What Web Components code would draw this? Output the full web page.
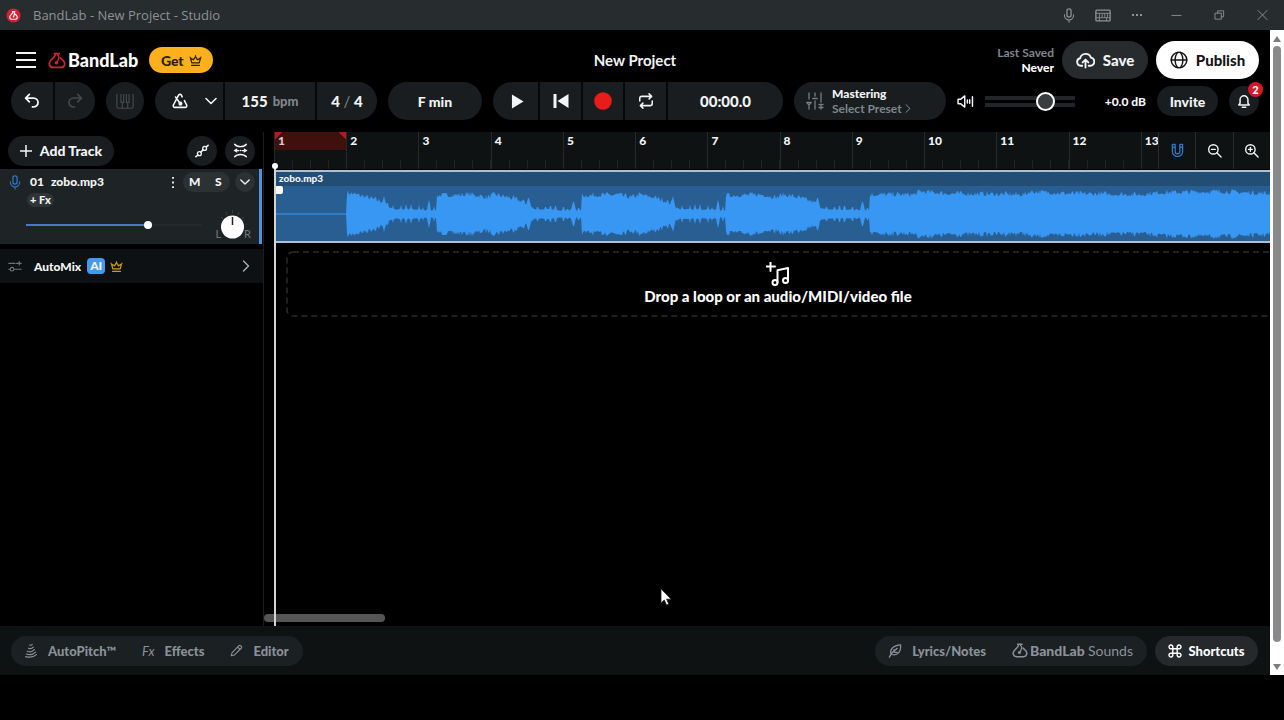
<!DOCTYPE html>
<html lang="en">
<head>
<meta charset="utf-8">
<meta name="viewport" content="width=device-width, initial-scale=1">
<title>BandLab - New Project - Studio</title>
<style>
  html, body { margin: 0; background: #000; }
  body { font-family: Lato, "Noto Sans", sans-serif; color: #f2f4f5; font-size: 14px; }
</style>
</head>
<body>
<studio-app></studio-app>
<script>
const BASE = `
  *, *::before, *::after { box-sizing: border-box; }
  button { font: inherit; color: inherit; background: none; border: 0; padding: 0; margin: 0;
    display: inline-flex; align-items: center; justify-content: center; white-space: nowrap; }
  a { color: inherit; text-decoration: none; }
  h1, h2, p { margin: 0; font: inherit; }
`;

function define(name, css, html, ready) {
  const template = document.createElement('template');
  template.innerHTML = `<style>${BASE}${css}</style>${html}`;
  customElements.define(name, class extends HTMLElement {
    connectedCallback() {
      if (this.shadowRoot) return;
      this.attachShadow({ mode: 'open' }).append(template.content.cloneNode(true));
      if (ready) ready.call(this, this.shadowRoot);
    }
  });
}

/* Icons: [viewBox, markup]; strokes and fills take the current colour. */
const ICONS = {
  menu: ['0 0 20 18', '<path d="M0 2h20M0 9h20M0 16h20" stroke-width="2.2"/>'],
  flame: ['0 0 20 18', '<path d="M7 1.300h5.600M8.200 1.500c.2 1.700-.6 2.900-2 4.100L3 9C.1 12.400 1.600 16.700 5.600 16.700h8.800c4 0 5.500-4.300 2.600-7.700L13.800 6" stroke-width="1.900"/><path d="M10.600 1.500c.2 2 1.800 2.600 1.400 4.500-.3 1.600-1 3-1.700 4.400" stroke-width="1.600"/><circle cx="9.300" cy="11.500" r="1.900" class="f"/>'],
  crown: ['0 0 16 16', '<path d="M3.400 10.800 1.800 4.800 5.400 7.200 8 3.200l2.600 4 3.600-2.400-1.600 6zM3.200 14h9.600"/><circle cx="8" cy="1.800" r=".7" class="f"/><circle cx="1.200" cy="3.800" r=".7" class="f"/><circle cx="14.800" cy="3.800" r=".7" class="f"/>'],
  undo: ['0 0 18 18', '<path d="M6 1.500 1.800 5.700 6 10M2 5.700h8.800a5 5 0 0 1 0 10H9.500" stroke-width="2"/>'],
  redo: ['0 0 18 18', '<path d="M12 1.500 16.200 5.700 12 10M16 5.700H7.200a5 5 0 0 0 0 10h1.300" stroke-width="1.800"/>'],
  keys: ['0 0 20 18', '<path d="M1 1v13.500a2 2 0 0 0 2 2h14a2 2 0 0 0 2-2V1M7 10v6.500M13 10v6.500M5.500 1v9h3V1M11.500 1v9h3V1" stroke-width="1.300"/>'],
  metronome: ['0 0 18 18', '<path d="M11.400 4.300 10.600 2.500a1.800 1.800 0 0 0-3.200 0L1.600 13.500a1.800 1.800 0 0 0 1.600 2.700h11.600a1.800 1.800 0 0 0 1.600-2.700L14 8.500M4 4.500l5 7" stroke-width="1.800"/><circle cx="9.500" cy="12" r="2.300" class="f"/>'],
  chevron: ['0 0 12 12', '<path d="m1 3.500 5 5 5-5" stroke-width="1.600"/>'],
  right: ['0 0 8 12', '<path d="m1.500 1 5 5-5 5" stroke-width="1.400"/>'],
  play: ['0 0 14 16', '<path class="f" d="M1 .5 13.500 8 1 15.500z"/>'],
  back: ['0 0 16 16', '<path class="f" d="M.5 1h3v14h-3zM15.500 1v14L4.500 8z"/>'],
  record: ['0 0 18 18', '<circle class="f" cx="9" cy="9" r="8.800"/>'],
  loop: ['0 0 18 18', '<path d="M2 9V5.800a2 2 0 0 1 2-2h11M12.500 1l2.800 2.800-2.800 2.800M16 9v3.200a2 2 0 0 1-2 2H3M5.500 11.400 2.700 14.200 5.500 17" stroke-width="1.700"/>'],
  mixer: ['0 0 18 18', '<path d="M3 1v6M3 14v3M9 1v3M9 9v8M15 1v9M15 13v4M.8 10.500h4.400L3 13.200zM6.800 6.500h4.400M13 12.500h4M13 15.500h4" stroke-width="1.300"/>'],
  cloud: ['0 0 20 18', '<path d="M6.500 14.500H5A4 4 0 0 1 4.300 6.600 6 6 0 0 1 15.800 6a4.300 4.300 0 0 1-.4 8.500h-2M10 16.500V8.200M7 11l3-3 3 3" stroke-width="2"/>'],
  globe: ['0 0 18 18', '<circle cx="9" cy="9" r="7.800"/><path d="M1.200 9h15.600M7.500 1.400c-3.300 4.500-3.300 10.700 0 15.200M10.500 1.400c3.300 4.500 3.300 10.700 0 15.200" stroke-width="1.400"/>'],
  speaker: ['0 0 18 14', '<path d="M1 4.500h3L8.200 1v12L4 9.500H1zM11 5.500v3M13.500 5v4M16.500 2v10" stroke-width="1.600"/>'],
  bell: ['0 0 16 18', '<path d="M2 13.500h12l-1.500-2V7.500a4.500 4.500 0 0 0-9 0v4zM6 16.200h4" stroke-width="1.700"/>'],
  plus: ['0 0 12 12', '<path d="M6 0v12M0 6h12" stroke-width="1.500"/>'],
  automation: ['0 0 16 16', '<circle cx="5" cy="11" r="2.200"/><circle cx="11" cy="5" r="2.200"/><path d="M1 14.500l2.200-1.800M6.600 9.300 9.300 6.700M12.800 3.300l2.200-1.800" stroke-width="1.700"/>'],
  fit: ['0 0 18 18', '<path d="M2 1.500c1.500 2 4 2.800 7 2.800s5.500-.8 7-2.800M2 16.500c1.500-2 4-2.800 7-2.800s5.500.8 7 2.800" stroke-width="1.700"/><path d="M5 9h2M11 9h2" stroke-width="1.500"/><path class="f" d="M.5 9 5 6.200v5.600zM17.500 9 13 6.200v5.600z"/><circle class="f" cx="9" cy="9" r="1"/>'],
  mic: ['0 0 14 18', '<rect x="4.500" y="1" width="5" height="10" rx="2.500"/><path d="M1.500 8v.8a5.500 5.500 0 0 0 11 0V8M7 14.300V17" stroke-width="1.300"/>'],
  kebab: ['0 0 4 12', '<path class="f" d="M1 0h2v2H1zM1 5h2v2H1zM1 10h2v2H1z"/>'],
  automix: ['0 0 18 14', '<path d="M1 3h8M11 3h6M14.500.8v4.400M8.500 10.500h8.500M1 10.500h1.500" /><circle cx="5.300" cy="10.500" r="2.300"/>'],
  magnet: ['0 0 14 16', '<path d="M1.500 1.500h3V9a2.500 2.500 0 0 0 5 0V1.500h3V9a5.500 5.500 0 0 1-11 0zM1.500 4.500h3M9.500 4.500h3" stroke-width="1.400"/>'],
  zoomout: ['0 0 16 16', '<circle cx="6.800" cy="6.800" r="5"/><path d="m10.500 10.500 4.500 4.500M4.800 6.800h4" stroke-width="1.500"/>'],
  zoomin: ['0 0 16 16', '<circle cx="6.800" cy="6.800" r="5"/><path d="m10.500 10.500 4.500 4.500M4.800 6.800h4M6.800 4.800v4" stroke-width="1.500"/>'],
  note: ['0 0 24 24', '<path d="M4.500 0v9M0 4.500h9" stroke-width="2"/><circle cx="9" cy="20.500" r="2.500" stroke-width="2"/><circle cx="19.500" cy="18.500" r="2.500" stroke-width="2"/><path d="M11.500 20.500V8.200L22 6v12.500" stroke-width="2"/>'],
  autopitch: ['0 0 16 18', '<path d="M6.500 2.500c1.200.4 2.200.1 3-.9M5 6.200c2 1 4.300.4 5.700-1.200M3.500 9.800c3 1.300 6.500.4 8.500-1.800M2.500 13.200c3.800 1.400 8.500.3 11-2.200M1.500 16.300c5 1.200 10.500 0 13-2.300" stroke-width="1.400"/>'],
  pencil: ['0 0 16 16', '<path d="M1.500 14.500 2.600 10.600 10.800 2.200a1.800 1.800 0 0 1 2.600 0l.4.400a1.800 1.800 0 0 1 0 2.600L5.500 13.500zM9.300 3.800l3 3" stroke-width="1.400"/>'],
  feather: ['0 0 16 16', '<path d="M1.500 15C3.500 11 6.500 7.500 10.500 5M3.500 12C1.500 6.500 6 1.500 14.500 1c.3 8-3.500 12.500-10 11M6.800 6.500v2.500M7.500 9.500h3" stroke-width="1.400"/>'],
  command: ['0 0 16 16', '<path d="M5.500 5.500H3.700a2.200 2.200 0 1 1 1.800-1.800v8.600a2.200 2.200 0 1 1-1.800-1.800h8.600a2.200 2.200 0 1 1-1.800 1.800V3.700a2.200 2.200 0 1 1 1.800 1.800z" stroke-width="1.600"/>'],
  typing: ['0 0 18 14', '<rect x="1" y="1" width="16" height="12" rx="1"/><path d="M1 4.500h16M5 5v4M8 5v4M11 5v4M14 5v4M1 9.500h16M5 10v3M13 10v3" stroke-width="1"/>'],
  dots: ['0 0 12 4', '<path class="f" d="M1 1h2v2H1zM5 1h2v2H5zM9 1h2v2H9z"/>'],
  min: ['0 0 12 12', '<path d="M1 6.500h10" stroke-width="1"/>'],
  restore: ['0 0 12 12', '<path d="M1.500 4h6.500v6.500H1.500zM4 4V1.500h6.500V8H8" stroke-width="1"/>'],
  close: ['0 0 12 12', '<path d="m1 1 10 10M11 1 1 11" stroke-width="1"/>'],
  cursor: ['0 0 12 18', '<path fill="#fff" stroke="#222" stroke-width=".8" d="M1 1v14l3.300-3 2.200 5 2.300-1-2.200-4.800H11z"/>'],
  badge: ['0 0 16 16', '<circle cx="8" cy="8" r="7.500" fill="#d81f32" stroke="none"/><path stroke="#fff" d="M6.800 3.800h2.800M7.300 4c0 1.200-.6 1.800-1.500 2.700L4.700 8c-1.500 1.800-.5 4 1.400 4h3.800c1.900 0 2.900-2.200 1.400-4L9.800 6.500M8.500 4.200 9 6 8.300 9" stroke-width="1.200"/><circle cx="8" cy="9.300" r=".8" fill="#fff" stroke="none"/>'],
  up: ['0 0 8 6', '<path class="f" d="M4 0 8 6H0z"/>'],
  down: ['0 0 8 6', '<path class="f" d="M4 6 0 0h8z"/>'],
};

customElements.define('ui-icon', class extends HTMLElement {
  connectedCallback() {
    if (this.shadowRoot) return;
    const [box, art] = ICONS[this.getAttribute('name')];
    const [, , w, h] = box.split(' ');
    this.attachShadow({ mode: 'open' }).innerHTML = `
      <style>:host { display: inline-flex; flex: none; }
      svg { display: block; fill: none; stroke: currentColor; stroke-width: 1.500; stroke-linecap: round; stroke-linejoin: round; }
      .f { fill: currentColor; stroke: none; }</style>
      <svg width="${this.getAttribute('w') || w}" height="${this.getAttribute('h') || h}" viewBox="${box}" aria-hidden="true">${art}</svg>`;
  }
});

define('pill-group', `
  :host { display: flex; flex: none; height: 38px; border-radius: 20px; background: #191d1f; overflow: hidden; align-items: stretch; }
`, `<slot></slot>`);

define('window-bar', `
  :host { display: flex; align-items: center; height: 30px; background: #272c2f; color: #8e9293; padding: 0 16px 0 6px;
    font: 13px/16px "Open Sans", "Noto Sans", sans-serif; }
  .name { margin-left: 12px; flex: 1; }
  nav { display: flex; align-items: center; gap: 20px; }
  .sys { display: flex; gap: 32px; margin-left: 8px; }
`, `<ui-icon name="badge" w="15" h="15"></ui-icon><span class="name">BandLab - New Project - Studio</span>
  <nav aria-label="Window">
    <button aria-label="Microphone"><ui-icon name="mic" w="12" h="15"></ui-icon></button>
    <button aria-label="Keyboard"><ui-icon name="typing" w="16" h="13"></ui-icon></button>
    <button aria-label="More"><ui-icon name="dots"></ui-icon></button>
    <span class="sys">
      <button aria-label="Minimise"><ui-icon name="min" w="11"></ui-icon></button>
      <button aria-label="Restore"><ui-icon name="restore" w="11"></ui-icon></button>
      <button aria-label="Close"><ui-icon name="close" w="11"></ui-icon></button>
    </span>
  </nav>`);

define('project-header', `
  :host { display: grid; grid-template-columns: 1fr auto 1fr; align-items: center; height: 38px; }
  .left, .right { display: flex; align-items: center; }
  .logo { display: flex; align-items: center; gap: 2px; font-size: 18px; line-height: 20px; font-weight: 900; color: #fff; margin: 0 11px 0 12px; }
  .logo ui-icon { color: #d3232f; }
  .menu { margin-left: 5px; }
  .get { height: 26px; width: 64px; border-radius: 13px; background: #fbb01c; color: #2c1c00; gap: 5px; font-weight: 900; font-size: 14px; }
  h1 { font-size: 15px; line-height: 20px; font-weight: 700; }
  .right { justify-content: flex-end; gap: 8px; }
  .saved { text-align: right; font-size: 12px; line-height: 15px; color: #7f868c; font-weight: 700; }
  .saved b { display: block; color: #fff; font-weight: 900; }
  .big { height: 38px; border-radius: 19px; background: #272b2e; font-size: 15px; font-weight: 900; width: 86px; gap: 8px; }
  .publish { background: #fff; color: #141414; width: 103px; }
`, `<div class="left">
    <button class="menu" aria-label="Menu"><ui-icon name="menu"></ui-icon></button>
    <a class="logo" href="#"><ui-icon name="flame" w="18" h="17"></ui-icon>BandLab</a>
    <button class="get">Get <ui-icon name="crown" w="13" h="13"></ui-icon></button>
  </div>
  <h1>New Project</h1>
  <div class="right">
    <p class="saved">Last Saved<b>Never</b></p>
    <button class="big"><ui-icon name="cloud" w="19" h="17"></ui-icon>Save</button>
    <button class="big publish"><ui-icon name="globe"></ui-icon>Publish</button>
  </div>`);

define('transport-bar', `
  :host { display: flex; align-items: center; gap: 11px; height: 38px; font-weight: 900; font-size: 15px; }
  pill-group > * + * { border-left: 2px solid #060707; }
  .w42 { width: 42px; } .w38 { width: 38px; } .w68 { width: 68px; gap: 17px; padding-left: 11px; } .w92 { width: 92px; gap: 5px; } .w62 { width: 62px; }
  .w94 { width: 94px; font-size: 14px; } .w45 { width: 45px; padding-left: 4px; } .w43 { width: 43px; }
  .time { width: 117px; display: flex; align-items: center; justify-content: center; font-size: 15px; }
  .dim { color: #45494c; }
  small { font-size: 13px; color: #7f868c; }
  i { font-style: normal; color: #7f868c; font-weight: 400; }
  .rec { color: #e81d1a; }
  .master { width: 152px; justify-content: flex-start; padding-left: 12px; gap: 8px; text-align: left; font-size: 12px; line-height: 15px; }
  .master ui-icon { color: #777d82; }
  .master span span { display: block; color: #7f868c; font-weight: 700; }
  .vol { display: flex; align-items: center; gap: 11px; flex: 1; }
  input { -webkit-appearance: none; appearance: none; margin: 0; width: 90px; height: 20px; background: linear-gradient(#222628 0 0) 0 5px / 100% 4px no-repeat, linear-gradient(#222628 0 0) 0 12px / 100% 4px no-repeat; }
  input::-webkit-slider-thumb { -webkit-appearance: none; width: 19px; height: 19px; border-radius: 50%; background: #3a3d40; border: 2px solid #fff; }
  output.db { margin-left: auto; font-size: 12px; }
  .invite { width: 61px; height: 30px; border-radius: 15px; background: #191d1f; font-size: 14px; }
  .bell { width: 30px; height: 30px; border-radius: 15px; background: #191d1f; position: relative; }
  .bell b { position: absolute; top: -4px; right: -4px; width: 15px; height: 15px; border-radius: 50%; background: #d6182b; color: #fff; font-size: 11px; line-height: 15px; text-align: center; }
`, `<pill-group>
    <button class="w42" aria-label="Undo"><ui-icon name="undo" w="16" h="16"></ui-icon></button>
    <button class="w42 dim" aria-label="Redo"><ui-icon name="redo" w="16" h="16"></ui-icon></button>
  </pill-group>
  <pill-group><button class="w38 dim" aria-label="Keyboard"><ui-icon name="keys" w="18" h="17"></ui-icon></button></pill-group>
  <pill-group>
    <button class="w68" aria-label="Metronome"><ui-icon name="metronome" w="16" h="16"></ui-icon><ui-icon name="chevron"></ui-icon></button>
    <button class="w92">155 <small>bpm</small></button>
    <button class="w62">4&nbsp;<i>/</i>&nbsp;4</button>
  </pill-group>
  <pill-group><button class="w94">F min</button></pill-group>
  <pill-group>
    <button class="w45" aria-label="Play"><ui-icon name="play" w="13" h="15"></ui-icon></button>
    <button class="w43" aria-label="Back to start"><ui-icon name="back"></ui-icon></button>
    <button class="w42 rec" aria-label="Record"><ui-icon name="record"></ui-icon></button>
    <button class="w43" aria-label="Loop"><ui-icon name="loop" w="16" h="16"></ui-icon></button>
    <output class="time">00:00.0</output>
  </pill-group>
  <pill-group><button class="master"><ui-icon name="mixer"></ui-icon><span>Mastering<span>Select Preset <ui-icon name="right" w="6" h="9"></ui-icon></span></span></button></pill-group>
  <div class="vol"><ui-icon name="speaker" w="17" h="13"></ui-icon><input type="range" min="0" max="100" value="72" aria-label="Master volume"><output class="db">+0.0 dB</output></div>
  <button class="invite">Invite</button>
  <button class="bell" aria-label="Notifications"><ui-icon name="bell" w="14" h="16"></ui-icon><b>2</b></button>`);

define('pan-knob', `
  :host { display: flex; align-items: flex-end; color: #71777b; font-size: 11px; line-height: 12px; }
  svg { display: block; margin: 0 -1px; }
`, `<span>L</span><svg width="25" height="30" viewBox="0 0 25 30" role="img" aria-label="Pan centre">
    <g stroke="#3d4245"><path d="M12.500 0v3M6 2l1 3M19 2l-1 3M1 7l2 2M24 7l-2 2"/></g>
    <circle cx="12.500" cy="17" r="11.500" fill="#fff"/><path d="M12.500 7v8" stroke="#222" stroke-width="1.500"/></svg><span>R</span>`);

define('track-card', `
  :host { display: block; height: 75px; background: #1e2426; border-right: 3px solid #4a94e4; padding: 3px 4px 0 9px; }
  .top, .low { display: flex; align-items: center; }
  .top { height: 20px; font-size: 12px; line-height: 14px; font-weight: 900; }
  .mic { color: #2f7ac9; margin-right: 9px; }
  .name { flex: 1; }
  .name span { margin-left: 7px; }
  .ms { display: flex; width: 47px; height: 20px; border-radius: 10px; background: #2c3134; margin: 0 5px 0 8px; }
  .ms button { flex: 1; }
  .more { width: 20px; height: 20px; border-radius: 10px; background: #2c3134; }
  .fx { display: flex; width: 27px; height: 14px; margin: 1px 0 0 18px; border-radius: 7px; background: #2f3437; font-size: 11px; line-height: 14px; font-weight: 900; }
  .low { height: 35px; padding: 0 4px 0 17px; justify-content: space-between; }
  input { -webkit-appearance: none; appearance: none; margin: 0; width: 176px; height: 10px;
    background: linear-gradient(90deg, #4a78c8 0 120px, #23292b 120px) 0 4px / 100% 2px no-repeat; }
  input::-webkit-slider-thumb { -webkit-appearance: none; width: 8px; height: 8px; border-radius: 50%; background: #fff; }
`, `<div class="top"><ui-icon class="mic" name="mic" w="12" h="15"></ui-icon><span class="name">01<span><slot></slot></span></span>
    <button aria-label="Track menu"><ui-icon name="kebab" h="11"></ui-icon></button>
    <div class="ms"><button aria-label="Mute">M</button><button aria-label="Solo">S</button></div>
    <button class="more" aria-label="Expand"><ui-icon name="chevron" w="10" h="10"></ui-icon></button></div>
  <button class="fx">+ Fx</button>
  <div class="low"><input type="range" min="0" max="100" value="70" aria-label="Track volume"><pan-knob></pan-knob></div>`);

define('track-panel', `
  :host { display: block; width: 264px; flex: none; border-right: 1px solid #1b1e20; }
  .bar { display: flex; align-items: center; height: 37px; padding: 0 8px; gap: 8px; }
  .add { width: 106px; height: 30px; border-radius: 15px; background: #191d1f; gap: 8px; font-weight: 900; font-size: 14px; margin-right: auto; }
  .round { width: 30px; height: 30px; border-radius: 50%; background: #191d1f; }
  track-card { margin-right: 1px; }
  .automix { display: flex; width: 100%; height: 34px; margin-top: 5px; background: #0d1113; padding: 0 13px 0 8px; justify-content: flex-start; font-size: 12px; font-weight: 900; }
  .automix ui-icon:first-child { color: #6d7376; margin-right: 12px; }
  .ai { margin: 0 5px 0 6px; width: 18px; height: 16px; border-radius: 4px; background: #449bee; font-size: 12px; line-height: 16px; }
  .crown { color: #d3981f; }
  .go { margin-left: auto; color: #aaaeb0; }
`, `<div class="bar"><button class="add"><ui-icon name="plus"></ui-icon>Add Track</button>
    <button class="round" aria-label="Automation"><ui-icon name="automation" w="14" h="14"></ui-icon></button>
    <button class="round" aria-label="Fit tracks"><ui-icon name="fit" w="15" h="15"></ui-icon></button></div>
  <track-card>zobo.mp3</track-card>
  <button class="automix"><ui-icon name="automix" w="14" h="11"></ui-icon>AutoMix<span class="ai">AI</span><ui-icon class="crown" name="crown" w="13" h="13"></ui-icon><ui-icon class="go" name="right"></ui-icon></button>`);

define('time-ruler', `
  :host { display: block; position: relative; height: 38px; background: #0e1213; border-bottom: 1px solid #000; }
  ol { display: grid; grid-template-columns: repeat(13, 1fr) 57px; height: 100%; margin: 0; padding: 0; list-style: none; }
  li { border-left: 1px solid #25292b; padding: 2px 0 0 3px; font-size: 12px; line-height: 14px; font-weight: 900;
    background: repeating-linear-gradient(90deg, transparent 0 17px, #202426 17px 18px) 0 100% / 100% 9px no-repeat; }
  li.on { background-image: linear-gradient(225deg, #b01c22 0 5px, transparent 5px), linear-gradient(135deg, #b01c22 0 5px, transparent 5px), linear-gradient(90deg, #40100f 0 100%), repeating-linear-gradient(90deg, transparent 0 17px, #202426 17px 18px);
    background-size: 100% 18px, 100% 18px, 100% 18px, 100% 9px; background-position: 0 0, 0 0, 0 0, 0 100%; color: #d9c9c9; }
  nav { position: absolute; right: 0; top: 0; display: flex; width: 112px; height: 37px; background: #0e1213; }
  nav button { flex: 1; border-left: 1px solid #292d2f; }
  .snap { color: #2f76c4; }
`, `<ol></ol><nav aria-label="Timeline tools"><button class="snap" aria-label="Snap"><ui-icon name="magnet" w="13" h="15"></ui-icon></button>
    <button aria-label="Zoom out"><ui-icon name="zoomout" w="15" h="15"></ui-icon></button>
    <button aria-label="Zoom in"><ui-icon name="zoomin" w="15" h="15"></ui-icon></button></nav>`,
function (root) {
  root.querySelector('ol').innerHTML = Array.from({ length: 13 }, (_, i) => `<li${i ? '' : ' class="on"'}>${i + 1}</li>`).join('');
});

/* Half-height of the waveform, in pixels, at distance x from the clip's start. */
function envelope(x) {
  const lerp = (points, t) => {
    for (let i = 1; i < points.length; i++) {
      const [x0, y0] = points[i - 1], [x1, y1] = points[i];
      if (t <= x1) return y0 + (y1 - y0) * (t - x0) / (x1 - x0);
    }
    return points[points.length - 1][1];
  };
  if (x < 72) return 0;
  if (x < 162) return lerp([[0, 20], [14, 17], [28, 13], [36, 11], [46, 4], [90, 3]], x - 72);
  if (x < 595) return lerp([[0, 17], [36, 18], [50, 15], [58, 18], [73, 15], [86, 11], [98, 4], [144, 3]], (x - 162) % 144.5);
  return lerp([[0, 18], [44, 18], [50, 21], [80, 19], [155, 18], [160, 21], [200, 19], [270, 18], [290, 20], [350, 21], [400, 19]], x - 595);
}

define('audio-clip', `
  :host { display: block; height: 73px; background: #295e92; border-top: 2px solid #a9c0d6; border-bottom: 2px solid #a9c0d6; position: relative; }
  .name { height: 14px; background: #224e76; font-size: 10px; line-height: 12px; font-weight: 900; padding-left: 4px; }
  svg { display: block; width: 100%; height: 55px; }
  .handle { position: absolute; left: 0; top: 14px; width: 8px; height: 8px; border-radius: 2px; background: #fff; }
`, `<div class="name"><slot></slot></div><svg viewBox="0 0 995 55" preserveAspectRatio="none" aria-hidden="true"><path fill="#3897f3"/></svg><span class="handle"></span>`,
function (root) {
  let seed = 7;
  const random = () => (seed = (seed * 16807) % 2147483647) / 2147483647;
  const mid = 28, top = [], bottom = [];
  /* Single-pixel peaks: position within a phrase, half-height. */
  const peaks = [[225, 14], [236, 18], [245, 9], [253, 9], [258, 10], [263, 10], [271, 9], [275, 7], [281, 14], [286, 8]];
  for (let x = 0; x <= 995; x++) {
    const e = envelope(x);
    let h = 0.5;
    if (e) {
      const r = random();
      h = e + (e < 6 ? r * 1.5 : Math.pow(r, 1.5) * 5 - 0.5);
      const phase = x < 162 ? x + 127 : x < 595 ? (x - 162) % 144.5 + 144.5 : 0;
      for (const [at, size] of peaks) if (phase && Math.abs(phase - at) < 2) h = Math.max(h, size - Math.abs(phase - at) * 4);
    }
    top.push(`${x} ${(mid - h).toFixed(1)}`);
    bottom.unshift(`${x} ${(mid + h).toFixed(1)}`);
  }
  root.querySelector('path').setAttribute('d', `M${top.join('L')}L${bottom.join('L')}Z`);
});

define('drop-zone', `
  :host { display: flex; flex-direction: column; align-items: center; height: 66px; margin: 8px 0 0 12px; padding-top: 11px; position: relative; font-size: 15px; line-height: 20px; font-weight: 900; color: #fff; }
  svg.edge { position: absolute; inset: 0; width: 100%; height: 100%; }
  .edge rect { fill: none; stroke: #2b2b2b; stroke-width: 1.500; stroke-dasharray: 6 4; width: calc(100% + 20px); height: 64px; }
`, `<svg class="edge" aria-hidden="true"><rect x="1" y="1" rx="6"/></svg><ui-icon name="note"></ui-icon><span><slot></slot></span>`);

define('time-line', `
  :host { display: block; flex: 1; min-width: 0; position: relative; padding-left: 10px; overflow: hidden; }
  .head { position: absolute; left: 10px; top: 34px; bottom: 0; width: 2px; background: #d4d4d4; }
  .head::before { content: ""; position: absolute; left: -2px; top: -3px; width: 6px; height: 6px; border-radius: 50%; background: #fff; }
  .scroll { position: absolute; left: 0; bottom: 4px; width: 121px; height: 8px; border-radius: 4px; background: #555; }
  .pointer { position: absolute; left: 396px; top: 456px; }
  audio-clip { margin-left: 1px; }
`, `<time-ruler></time-ruler><audio-clip>zobo.mp3</audio-clip><drop-zone>Drop a loop or an audio/MIDI/video file</drop-zone>
  <span class="scroll"></span><span class="head"></span><ui-icon class="pointer" name="cursor"></ui-icon>`);

define('studio-dock', `
  :host { display: flex; align-items: center; gap: 8px; height: 49px; padding: 0 12px 0 11px; background: #0e1213; color: #8b9198; font-size: 13px; line-height: 16px; font-weight: 900; }
  .set { display: flex; align-items: center; height: 30px; border-radius: 15px; background: #1b2022; padding: 0 14px 0 13px; gap: 26px; }
  .set button { gap: 10px; }
  .left { margin-right: auto; }
  em { font-weight: 400; }
  .sounds { display: flex; align-items: center; gap: 2px; font-weight: 700; font-size: 14px; }
  .sounds span { font-weight: 400; }
  .short { width: 103px; height: 30px; border-radius: 15px; background: #25292c; color: #fff; gap: 6px; }
`, `<div class="set left">
    <button><ui-icon name="autopitch" w="14" h="15"></ui-icon>AutoPitch™</button>
    <button><em>Fx</em>Effects</button>
    <button><ui-icon name="pencil" w="13" h="13"></ui-icon>Editor</button>
  </div>
  <div class="set"><button><ui-icon name="feather" w="14" h="14"></ui-icon>Lyrics/Notes</button>
    <a class="sounds" href="#"><ui-icon name="flame" w="16" h="15"></ui-icon><b>BandLab <span>Sounds</span></b></a></div>
  <button class="short"><ui-icon name="command" w="14" h="14"></ui-icon>Shortcuts</button>`);

define('page-scroller', `
  :host { display: flex; flex-direction: column; align-items: center; gap: 4px; width: 14px; flex: none; background: #fff; color: #7d7d7d; padding: 6px 0 5px; }
  .thumb { flex: 1; width: 8px; border-radius: 4px; background: #8a8a8a; margin-bottom: 18px; }
`, `<ui-icon name="up"></ui-icon><span class="thumb"></span><ui-icon name="down"></ui-icon>`);

define('studio-app', `
  :host { display: flex; flex-direction: column; min-height: 100vh; padding-bottom: 45px; box-sizing: border-box; }
  .page { flex: 1; display: flex; }
  main { flex: 1; min-width: 0; display: flex; flex-direction: column; }
  project-header { margin: 11px 11px 3px; }
  transport-bar { margin: 0 11px 12px; }
  .work { flex: 1; display: flex; }
`, `<window-bar></window-bar>
  <div class="page"><main><project-header></project-header><transport-bar></transport-bar>
    <div class="work"><track-panel></track-panel><time-line></time-line></div>
    <studio-dock></studio-dock></main><page-scroller></page-scroller></div>`);
</script>
</body>
</html>
